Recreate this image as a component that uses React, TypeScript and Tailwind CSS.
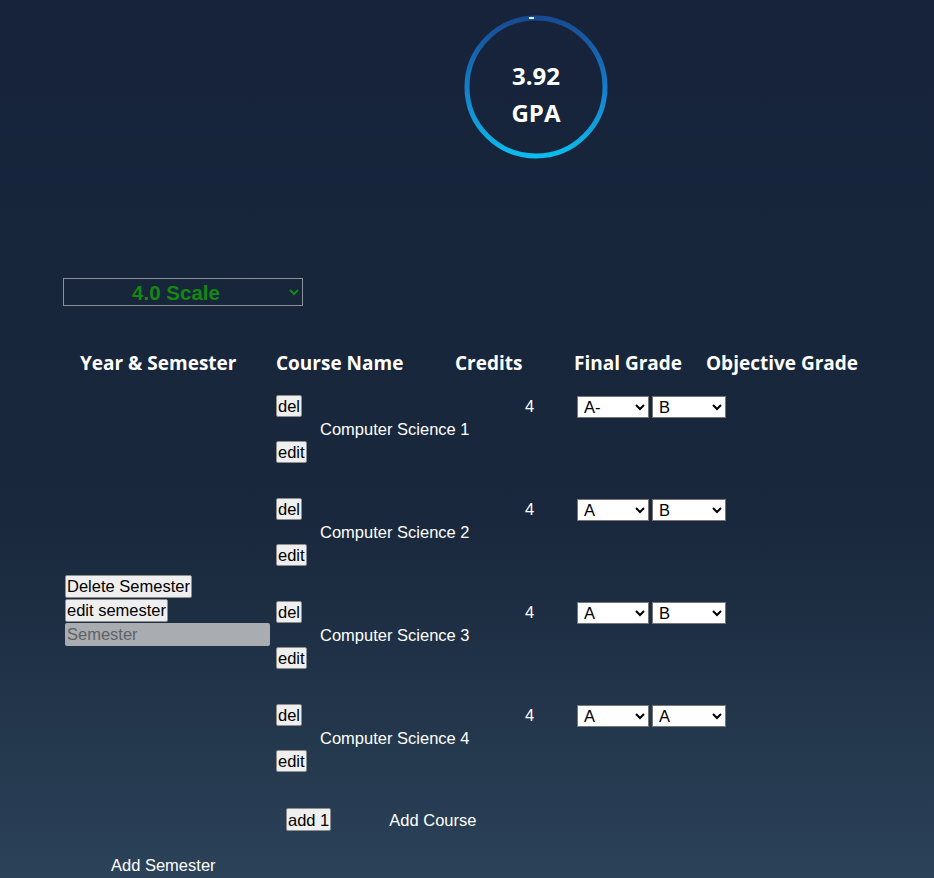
import React from "react";

const grades = ["A+", "A", "A-", "B+", "B", "B-", "C+", "C", "C-", "D+", "D", "F"];

const courses = [
  { name: "Computer Science 1", credits: 4, final: "A-", objective: "B" },
  { name: "Computer Science 2", credits: 4, final: "A", objective: "B" },
  { name: "Computer Science 3", credits: 4, final: "A", objective: "B" },
  { name: "Computer Science 4", credits: 4, final: "A", objective: "A" },
];

function Btn({ children, className = "" }: { children: React.ReactNode; className?: string }) {
  return (
    <button
      className={`rounded-[2px] border border-[#8f8f8f] bg-[#efefef] px-[1px] text-[16.5px] leading-[20px] text-black ${className}`}
    >
      {children}
    </button>
  );
}

function GradeSelect({ value, width }: { value: string; width: string }) {
  return (
    <select
      defaultValue={value}
      className={`h-[22px] ${width} border border-[#767676] bg-white pl-[2px] text-[16.5px] leading-[19px] text-black`}
    >
      {grades.map((g) => (
        <option key={g}>{g}</option>
      ))}
    </select>
  );
}

export default function App() {
  return (
    <div className="min-h-screen w-full bg-gradient-to-b from-[#16233a] via-[#19283d] via-60% to-[#2b4258] font-['Liberation_Sans',Arial,sans-serif] text-white">
      {/* GPA ring */}
      <div className="pt-[15px] pl-[464px]">
        <div className="relative h-[144px] w-[144px]">
          <svg width="144" height="144" viewBox="0 0 144 144" className="absolute inset-0">
            <defs>
              <linearGradient id="ring" x1="0" y1="0" x2="0" y2="1">
                <stop offset="0%" stopColor="#184a92" />
                <stop offset="55%" stopColor="#1582cc" />
                <stop offset="100%" stopColor="#0cbcee" />
              </linearGradient>
            </defs>
            <circle cx="72" cy="72" r="69" fill="none" stroke="url(#ring)" strokeWidth="5" />
            <line x1="65" y1="3" x2="70" y2="3" stroke="#e8eef5" strokeWidth="2" />
          </svg>
          <div className="absolute inset-0 flex flex-col items-center justify-center pt-[14px] font-['Open_Sans',sans-serif] text-[24px] font-bold leading-[37px]">
            <span>3.92</span>
            <span>GPA</span>
          </div>
        </div>
      </div>

      {/* Scale select */}
      <div className="pt-[119px] pl-[63px]">
        <select
          defaultValue="4.0 Scale"
          className="h-[28px] w-[240px] border border-[#8a9099] bg-transparent pr-[2px] text-[20.5px] font-bold text-[#138813] [text-align-last:center]"
        >
          <option className="text-black">4.0 Scale</option>
          <option className="text-black">5.0 Scale</option>
        </select>
      </div>

      {/* Table header */}
      <div className="mt-[43px] flex font-['Open_Sans',sans-serif] text-[19px] font-bold leading-[26px]">
        <div className="w-[276px] pl-[80px]">Year &amp; Semester</div>
        <div className="w-[179px]">Course Name</div>
        <div className="w-[119px]">Credits</div>
        <div className="w-[132px]">Final Grade</div>
        <div>Objective Grade</div>
      </div>

      {/* Table body */}
      <div className="mt-[17px] flex">
        <div className="flex w-[274px] flex-col items-start gap-[1px] pt-[182px] pl-[65px]">
          <Btn className="h-[23px]">Delete Semester</Btn>
          <Btn className="h-[23px]">edit semester</Btn>
          <input
            placeholder="Semester"
            className="h-[23px] w-[205px] rounded-[2px] bg-[#a9acb1] px-[2px] text-[16.5px] text-black placeholder:text-[#5f6266]"
          />
        </div>
        <div className="flex flex-col">
          {courses.map((c) => (
            <div key={c.name} className="flex h-[103px] items-start pt-[2px]">
              <div className="flex h-[68px] items-center">
                <div className="flex h-full w-[46px] flex-col items-start justify-between pl-[2px]">
                  <Btn>del</Btn>
                  <Btn>edit</Btn>
                </div>
                <div className="w-[205px] text-[16.5px] leading-[18px]">{c.name}</div>
              </div>
              <div className="w-[52px] pt-[2px] text-[16.5px] leading-[18px]">{c.credits}</div>
              <div className="flex gap-[3px] pt-[1px]">
                <GradeSelect value={c.final} width="w-[72px]" />
                <GradeSelect value={c.objective} width="w-[74px]" />
              </div>
            </div>
          ))}
          <div className="flex items-center pt-[3px] pl-[12px]">
            <Btn className="h-[23px]">add 1</Btn>
            <span className="pl-[58px] text-[16.5px]">Add Course</span>
          </div>
        </div>
      </div>

      <div className="pt-[24px] pb-[4px] pl-[111px] text-[16.5px] leading-[18px]">Add Semester</div>
    </div>
  );
}
